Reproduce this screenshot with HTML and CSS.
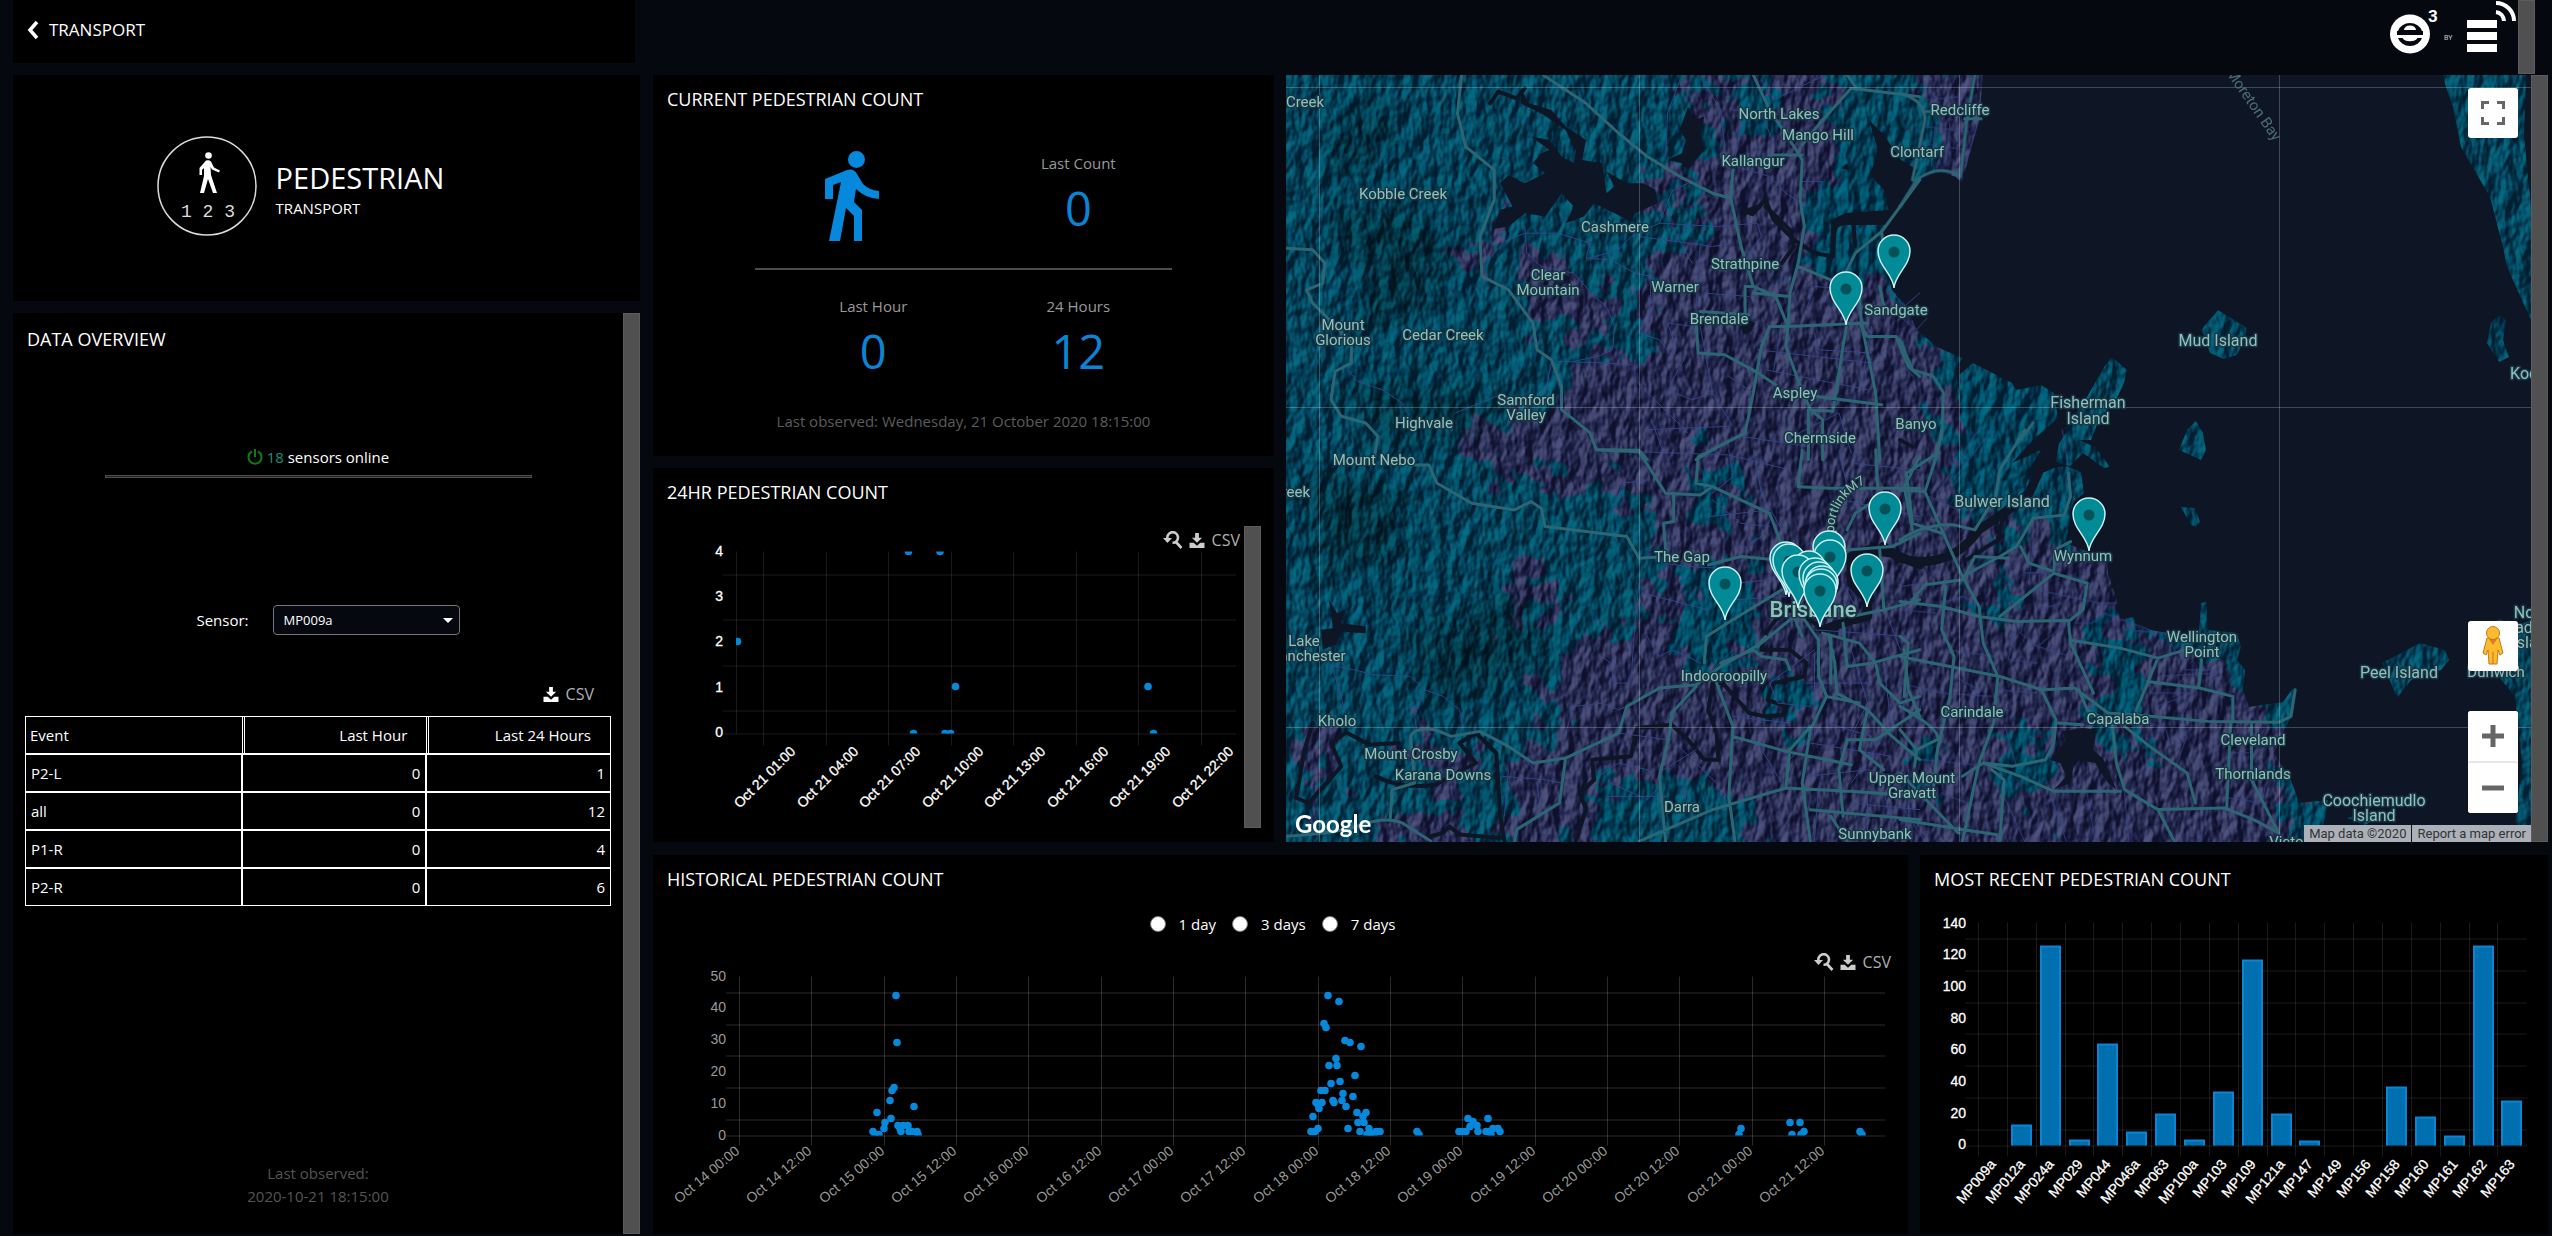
FILE: index.html
```html
<!DOCTYPE html>
<html lang="en">
<head>
<meta charset="utf-8">
<title>Pedestrian – Transport</title>
<link rel="stylesheet" href="styles.css">
</head>
<body>
<svg class="defs" width="0" height="0" aria-hidden="true">
  <symbol id="i-download" viewBox="0 0 16 16"><path fill="currentColor" d="M6 0h4v5h3.500L8 10.500 2.500 5H6zM0 10.500h4.500L8 13.500l3.500-3H16V16H0z"/></symbol>
  <symbol id="i-reset" viewBox="0 0 20 18"><path fill="none" stroke="currentColor" stroke-width="2.600" d="M5 9a5.300 5.300 0 1 1 4.500 2.800M12.500 10.500l6 6.500"/><path fill="currentColor" d="M0 7h9L4.500 12z"/></symbol>
</svg>

<header class="topbar">
  <a class="back" href="#">
    <svg width="12" height="20" viewBox="0 0 12 20" aria-hidden="true"><path d="M10 2L3 10l7 8" fill="none" stroke="#fff" stroke-width="3.500"/></svg>
    TRANSPORT
  </a>
  <div class="brand">
    <svg width="130" height="56" viewBox="2387 0 130 56" role="img" aria-label="e3">
      <ellipse cx="2409" cy="34" rx="20" ry="19.500" fill="#fff"/>
      <path d="M2397 31a12.500 11 0 0 1 24 0zM2397 38h4.500a8 5 0 0 0 15 0h4.500a12.500 11 0 0 1-24 0z" fill="#05080f"/>
      <path d="M2403 30a6 4.500 0 0 1 12 0z" fill="#fff"/>
      <path d="M2396 31h26v4h-26z" fill="#05080f"/>
      <text x="2427" y="22" class="brand-sup">3</text>
      <text x="2443" y="40" class="brand-by">BY</text>
      <path d="M2466 20h30v8h-30zM2466 32h30v8h-30zM2466 44h30v8h-30z" fill="#fff"/>
      <path d="M2495 12a9 9 0 0 1 8 9M2495 3a18 18 0 0 1 18 18" fill="none" stroke="#fff" stroke-width="4"/>
    </svg>
    <div class="scrollbar"></div>
  </div>
</header>

<main class="dash">
  <div class="left">
    <section class="card hero">
      <svg width="100" height="100" viewBox="0 0 100 100" aria-hidden="true">
        <circle cx="50" cy="50" r="49" fill="none" stroke="#ddd" stroke-width="1.500"/>
        <circle cx="51.500" cy="19.500" r="3.300" fill="#fff"/>
        <path d="M49 24.500q3-1 5 1l3 6 6 3-1 2-7-3-1.500-2.500L54 39l6 18h-4l-5-14-4 14h-4l4-17v-8l-2 2v5h-2.500v-7z" fill="#fff"/>
        <text x="51" y="81" class="hero-num" text-anchor="middle">1 2 3</text>
      </svg>
      <div class="hero-title">
        <h1>PEDESTRIAN</h1>
        <p>TRANSPORT</p>
      </div>
    </section>

    <section class="card overview">
      <div class="overview-body">
        <h2>DATA OVERVIEW</h2>
        <p class="online"><svg width="16" height="16" viewBox="0 0 16 16" aria-hidden="true"><path d="M5 2.500a6.500 6.500 0 1 0 6 0M8 0v8" fill="none" stroke="#0c7d16" stroke-width="2"/></svg> <b>18</b> sensors online</p>
        <hr>
        <div class="sensor">
          <label for="sensor">Sensor:</label>
          <span class="select"><select id="sensor"><option>MP009a</option></select></span>
        </div>
        <div class="tools"><button class="tool bright" type="button"><svg width="16" height="15"><use href="#i-download"/></svg><span>CSV</span></button></div>
        <table>
          <thead><tr><th>Event</th><th>Last Hour</th><th>Last 24 Hours</th></tr></thead>
          <tbody>
            <tr><td>P2-L</td><td>0</td><td>1</td></tr>
            <tr><td>all</td><td>0</td><td>12</td></tr>
            <tr><td>P1-R</td><td>0</td><td>4</td></tr>
            <tr><td>P2-R</td><td>0</td><td>6</td></tr>
          </tbody>
        </table>
        <p class="observed">Last observed:<br>2020-10-21 18:15:00</p>
      </div>
      <div class="scrollbar"></div>
    </section>
  </div>

  <div class="right">
    <div class="upper">
      <div class="middle">
        <section class="card">
          <h2>CURRENT PEDESTRIAN COUNT</h2>
          <div class="stats first">
            <svg class="walker" width="54" height="90" viewBox="0 0 54 90" aria-hidden="true"><circle cx="31.500" cy="8.500" r="8.500" fill="#0688dc"/><path fill="#0688dc" d="M0 28L22 19q7-2 10 4l6 10q6 6 16 7v8q-14-1-23-10l-2 13 8 8v31h-8V65l-8-8-6 33H4l12-59-8 3v14H0z"/></svg>
            <div class="stat"><span>Last Count</span><strong>0</strong></div>
          </div>
          <hr class="rule">
          <div class="stats">
            <div class="stat"><span>Last Hour</span><strong>0</strong></div>
            <div class="stat"><span>24 Hours</span><strong>12</strong></div>
          </div>
          <p class="note">Last observed: Wednesday, 21 October 2020 18:15:00</p>
        </section>

        <section class="card day">
          <h2>24HR PEDESTRIAN COUNT</h2>
          <div class="scroller">
            <div class="scroller-body">
              <div class="tools"><button class="tool" type="button" aria-label="Reset zoom"><svg width="20" height="18"><use href="#i-reset"/></svg></button><button class="tool" type="button"><svg width="16" height="15"><use href="#i-download"/></svg><span>CSV</span></button></div>
              <svg class="chart" id="day-chart" viewBox="653 551 591 277"></svg>
            </div>
            <div class="scrollbar"></div>
          </div>
        </section>
      </div>

      <section class="map">
        <div class="map-view">
        <svg class="map-art" viewBox="0 0 1245 767" preserveAspectRatio="xMidYMid slice" aria-label="Map of Brisbane">
          <defs>
            <filter id="relief" x="0" y="0" width="100%" height="100%" color-interpolation-filters="sRGB">
              <feTurbulence type="fractalNoise" baseFrequency=".07 .04" numOctaves="3" seed="8"/>
              <feColorMatrix values="0 0 0 0 0 0 0 0 0 0 0 0 0 0 0 1 0 0 0 0"/>
              <feDiffuseLighting surfaceScale="7" lighting-color="#fff"><feDistantLight azimuth="215" elevation="32"/></feDiffuseLighting>
            </filter>
            <filter id="ragged" x="-5%" y="-5%" width="110%" height="110%">
              <feTurbulence type="fractalNoise" baseFrequency=".035" numOctaves="4" seed="3"/>
              <feDisplacementMap in="SourceGraphic" scale="90" xChannelSelector="R" yChannelSelector="G"/>
            </filter>
            <filter id="soft"><feGaussianBlur stdDeviation="14"/></filter>
            <path id="land" d="M0 0H697L693 45 683 82 676 108 670 102 653 96 635 102 626 108 632 95 615 85 598 60 583 45 592 75 584 100 598 115 603 135 560 138 545 145 545 170 553 150 600 150 594 158 598 185 606 215 618 228 631 255 651 272 676 283 670 297 675 330 676 340 673 300 687 288 726 308 730 315 755 310 768 318 772 343 747 365 726 388 755 375 740 400 759 397 768 393 780 391 795 397 798 418 787 427 780 468 822 485 822 498 830 522 834 545 847 542 851 552 880 558 884 568 913 558 915 528 920 527 922 555 951 558 955 572 951 585 959 595 957 615 963 632 997 627 1007 613 1011 618 1003 645 988 678 1005 705 1013 728 1042 725 1038 748 1026 767H0z
              M1156 0L1167 32 1175 72 1204 122 1217 172 1221 192 1245 245V132L1238 60 1240 0z
              M915 255L932 235 961 253 959 262 951 280 938 284 924 278z
              M1213 240l7 5-3 20 6 17-10 5-12-19 4-20z
              M826 282L841 295 838 308 830 325 814 342 805 365 793 365 809 372 824 392 818 393 797 378 784 391 770 387 774 362 801 322 818 292z
              M910 346L917 358 920 375 915 385 893 375 901 355z
              M895 432L909 433 914 447 911 452 905 450z
              M1096 588L1134 568 1159 575 1163 585 1155 595 1125 605 1111 623 1105 608z
              M1061 743l20-5 8 6-10 6z
              M1229 552L1245 545V767L1229 752 1236 688 1229 622 1213 602 1196 595z"/>
            <clipPath id="land-clip"><use href="#land"/></clipPath>
            <g id="pin"><path d="M0 0C-1-14-16-22-16-37a16 16 0 0 1 32 0C16-22 1-14 0 0z" fill="#008b97" stroke="#c9f2f2" stroke-width="1.500"/><circle cy="-36" r="5.500" fill="#045257"/></g>
            <path id="m7" d="M548 458Q548 424 580 408"/>
          </defs>
          <rect width="1245" height="767" fill="#0e1626"/>
          <g clip-path="url(#land-clip)">
            <rect width="1245" height="767" fill="#02415a"/>
            <g fill="#252a53" filter="url(#ragged)">
              <path d="M165 365L205 345 275 325 290 290 370 280 360 195 395 175 410 150 480 160 500 210 540 220 580 200 630 220 640 260 660 310 665 360 660 420 720 455 790 470 830 480 850 530 870 570 960 600 975 650 1010 650 1000 710 1030 790H500L440 710 340 700 260 790H230L220 700 270 650 260 600 310 560 370 540 380 470 350 430 320 410 250 410z"/>
              <path d="M385 0H540L560 60 550 130 570 200 520 230 480 170 420 160 400 100 440 60z"/>
              <path d="M640 0H720V140H650z"/>
              <path d="M330 110L380 100 400 140 350 130zM130 640L190 680 170 720 130 700zM20 650L50 640 45 720 20 770zM160 180L210 150 200 210zM100 740L180 730 200 800H110zM210 500L260 470 280 540 230 560zM240 190L280 170 330 240 300 270 240 240z"/>
            </g>
            <g fill="#02415a" filter="url(#ragged)">
              <path d="M395 490L450 480 470 560 430 600 390 560zM400 380L460 400 450 440 410 430zM440 20L480 10 500 60 450 70zM520 120L590 60 600 200 560 220 520 180zM700 480L730 500 720 560 700 540zM810 540L860 560 850 700 810 640zM490 600L530 620 510 660 470 640zM720 640L760 650 750 740 710 720zM610 690L650 680 640 730zM660 300L780 320 780 400 690 420 660 380zM990 720L1030 720 1060 790H1000zM310 700L350 720 320 790H300z"/>
            </g>
            <g fill="#00121f" opacity=".45" filter="url(#soft)">
              <path d="M30 150L120 130 170 180 130 240 60 260 90 200zM60 310L200 320 210 350 100 370zM10 400L110 410 120 480 40 500zM120 560L230 520 260 580 150 640zM40 60L100 20 110 60 60 110z"/>
            </g>
            <rect class="relief" width="1245" height="767" filter="url(#relief)"/>
          </g>

          <g fill="#0e1626">
            <g transform="matrix(.408 0 0 .333 -6 -15)">
              <path d="M590 85L610 130 665 150 700 200 750 240 740 300 790 310 800 400 820 380 800 335 850 370 890 370 920 390 925 430 870 460 860 485 820 460 770 430 745 470 700 490 720 440 690 400 650 470 600 460 560 500 520 508 540 450 570 440 540 370 560 345 600 370 650 340 620 310 640 280 660 270 615 230 660 240 690 290 720 310 725 270 700 210 640 160 590 130z"/>
              <path d="M1000 140L1015 180 1040 170 1030 230 1040 270 1000 330 985 310 950 300 985 280 995 240 980 210zM1125 455L1180 430 1160 470zM1130 800l15-20 20 10-10 25-20 10zM1375 325l15-15 5 20z"/>
            </g>
            <g transform="matrix(.408 0 0 .333 -6 375)"><path d="M120 450L140 490 160 480 150 520 210 530 210 550 150 545 140 580 105 600 100 540 130 535z"/></g>
            <g transform="matrix(.416 0 0 .333 614 355)"><path d="M390 905L440 895 470 900 465 960 490 990 520 1080 500 1060 470 1000 420 990 410 1060 370 1080 400 1040 385 1000 360 990 400 930z"/></g>
          </g>

          <g class="line water">
            <g transform="matrix(.408 0 0 .333 -6 -15)"><path d="M1160 460L1190 420 1210 480 1260 540 1310 580 1355 590 1360 500 1400 480 1490 465M1190 440L1250 510 1260 560 1230 610M515 130L535 95 580 115 600 85M1405 490L1410 560"/></g>
            <g transform="matrix(.408 0 0 .333 -6 375)"><path d="M725 1175L750 1080 735 1030 770 990 765 930 860 920 875 835 960 825 1000 870 1040 930 1075 930 1070 850 1050 780 1060 700 1085 700 1150 790 1190 800 1235 795 1240 770 1195 750 1210 700 1285 680 1290 640 1250 600 1180 600 1190 550 1215 510 1250 480 1300 510 1330 540M165 850L220 885 290 880M235 980Q300 1020 380 1005L480 940 440 880 480 850 530 910 540 1100 550 1175M80 820L60 900 40 1045 70 1060 150 950 125 880 160 850M370 1160L400 1150 415 1130 440 1155 540 1165"/><path class="wide" d="M1330 540L1390 515 1440 500 1440 450 1400 400 1400 320 1440 300 1500 310 1568 345"/></g>
            <g transform="matrix(.416 0 0 .333 614 355)"><path class="wide" d="M-40 350L0 385Q70 410 130 370 160 350 190 300L260 240 310 190 350 80 390 0"/><path d="M250 250L235 330 160 390M520 430L510 470 530 470M0 30L30 50"/></g>
          </g>

          <g class="line street">
            <g transform="matrix(.408 0 0 .333 -6 -15)"><path d="M980 60L950 160 945 290M1035 60L1080 150 1090 260M1110 150L1180 160 1210 250M1130 150L1125 240 1110 320M1180 60L1210 120 1310 60 1330 50M1120 320L1200 350 1240 400 1290 440M1280 365H1330L1320 440M600 500L605 580 640 620 720 640 770 710 800 740 820 800 815 870 780 890 720 905M510 600L550 545 600 520 680 520 760 550 750 595 810 600 870 640 910 650M760 595L830 570 860 530 930 490 960 395 1000 370M930 490L1070 500 1170 490 1180 530 1140 600M880 530L1060 560 1110 550M960 500L1010 610M910 650L905 780M1030 550L1020 740M890 780L880 820 930 840 960 890 970 860 950 790 1010 800M1030 800L1060 1000 1110 1100M1040 700L1150 710M990 900L950 990 1010 1020 1060 1000M870 900L870 960 1000 1120M680 905L800 910 860 915M165 930L190 965 250 990 300 1030 315 1065M430 1060L530 1010 610 1040 650 1000 665 910M1170 870L1450 910M1190 930L1440 990M1230 790L1210 930M1310 820L1320 870 1450 880M1450 800L1420 1010M1240 1140L1370 1060 1400 1180M1290 750L1310 680 1400 690M900 1110L1100 1100M940 1180L910 1080M1490 680L1530 740 1568 700M1130 1130L1290 1160M1100 950L1160 1000"/></g>
            <g transform="matrix(.408 0 0 .333 -6 375)"><path d="M120 645L180 660 230 675 320 680 355 720 400 740 440 780 450 845M130 660L150 740 160 790M355 720L330 800 335 840M545 980L650 990 690 1000M650 990L600 930M550 1100L560 960M630 1000L640 1100M880 5L1100 15 1250 60M1100 0L1110 80 1060 130M1160 0L1180 130 1230 240M1050 200L1200 180M940 340L1000 350 1080 355M880 400L870 520 860 700M900 560L930 620 960 600 1000 620 1030 640M860 700L820 700 810 640 790 620M700 850L720 770 790 760 830 780 850 770M780 980L830 940 900 960 930 1010 900 1050 810 1000M800 1040L950 1040M960 870L1070 1000 1090 1050M830 850L950 870M980 950L1000 1090M1020 900L940 960M1110 800L1250 820M1120 400L1200 390 1250 350M1110 450L1240 440M1060 150L1130 220 1200 230M1310 600L1200 700 1220 760 1300 770M1310 610L1310 860 1240 940M1300 880L1500 920M1290 700L1450 700M1400 600L1440 760 1400 860M1480 640L1500 850M1340 820L1450 860M1470 880L1400 1000M1290 980L1440 960 1568 1000M1380 400L1410 470M1490 500L1520 600M1380 150L1568 200M1400 40L1568 60M1370 0L1390 110M1130 300L1180 260 1200 210M820 170L840 100 900 90M1310 540L1540 560M1160 860L1230 1000M1320 1010L1310 1170M1440 1030V1170M1480 1030L1500 1110M1540 960V1170M1400 1060L1568 1080M890 430L1050 480M1110 600L1070 650"/></g>
            <g transform="matrix(.416 0 0 .333 614 -75)"><path d="M60 300L150 290M60 380L165 395M50 430L160 450M120 370L110 500M85 380L75 500M190 360L160 480M60 250L90 300M0 950L40 990 65 955M80 1190L0 1290M190 1290L170 1320M0 1080L30 1130"/></g>
            <g transform="matrix(.416 0 0 .333 614 355)"><path d="M190 0L90 190M220 0L110 180M70 200L140 240 170 210M390 0L400 70 405 120M320 350L310 460M300 430L370 425M330 480L480 520 520 520M420 440L470 470M390 520L330 540M480 520L490 560 460 580 420 580M300 560L290 610 330 650 410 680M330 650L380 600 410 580M540 600L640 610 660 660M680 680L685 720 755 720 750 780M600 790L700 790 620 830M620 740L760 730M700 800L670 880 690 920 660 1020M800 970H840M790 1105L870 1120 880 1060M100 520L150 500 190 520M110 660L230 680M130 740L190 780 180 900M50 840L20 900M60 790L40 870 100 900M0 540L90 550M50 990L180 1005M0 760L100 790 220 800M280 1010L250 880M230 780L330 790M0 470L60 460M490 550L600 600M280 600L260 690 330 700M580 870L640 900 650 950M540 1090L550 1236M740 1140L720 1236M250 1100L300 1236M100 1090L180 1130M0 1120L60 1236M360 1090L400 1236M450 1090L470 1236"/></g>
          </g>

          <g class="line highway">
            <g transform="matrix(.408 0 0 .333 -6 -15)"><path d="M445 45L435 160 455 260 525 330 525 420 490 530 495 650 560 690 620 790 630 870 665 900 690 980 690 1050 760 1120 775 1170 880 1172 900 1200M645 45L750 130 830 220 900 290 980 350 1060 400 1105 415 1130 560 1160 680 1215 710 1245 800 1240 860 1275 980 1300 1050 1330 1080V1200M1110 330L1105 415M1160 45L1200 150 1260 260 1280 300 1275 420 1285 500 1270 610 1250 700 1245 800 1200 800 1180 860 1160 1000 1140 1120 1060 1170 1020 1200M1280 255L1330 180 1400 85 1568 110M1390 45L1410 80M1200 285H1280M1270 620L1350 660 1420 700 1425 790 1460 1000 1470 1200M1568 360L1475 515 1410 580 1370 680M1475 515L1480 600M1245 800L1440 790M1420 790L1440 830 1510 830 1540 920 1568 950M15 565L80 570 110 610 105 670 65 690 80 730 105 760 175 850V910L135 935 125 1020 150 1070 210 1090 240 1130 230 1200M1160 680H1140V790M1030 755L1150 765M1020 790L1025 880 1090 885 1165 935 1215 975M1310 1010L1475 1035M1355 1055L1380 860 1390 790M1295 1050L1355 1055M1295 1050V1200M1470 680L1480 740M1160 700L1250 710"/></g>
            <g transform="matrix(.408 0 0 .333 -6 375)"><path d="M330 45H365L385 100 470 160 575 180 615 155 640 175 650 230 750 245 850 260 880 325 920 322M780 0L880 5 945 130 1030 135 1060 110 1200 190 1225 270 1220 330 1130 320 1050 345M1060 110L1020 100 1025 20 1060 0M965 135V215L940 220 945 300M15 1160Q150 1150 200 1125 260 1100 300 1120L370 1175M270 1110L275 1020 330 1000 320 860Q330 830 380 840L420 860 490 845 560 890 620 940 700 925 830 850 850 770 930 715 1020 705 1080 650 1180 580 1260 500M700 925L685 1060 580 1140 575 1175M880 1175L1060 1080 1240 1015 1400 1025 1568 1040M1070 700L1110 830 1100 1040 1115 1175M1110 860L1240 905 1400 945M1040 640L1045 560 1110 510 1230 420M1020 710L960 790 955 850 930 980 945 1175M1080 640L1160 600 1180 620 1240 630 1250 660M1280 500L1320 570V680L1340 740 1300 840 1280 1000 1300 1175M1345 560L1360 640 1365 730 1440 780 1500 860 1568 930M1330 550L1420 580 1460 640 1470 700 1520 760 1568 740M1380 520L1390 650 1450 640 1568 600M1568 800L1540 720 1530 600M1568 780L1460 870 1390 870 1370 960 1380 1100M1340 740L1420 760M1240 1010L1250 900 1300 830M1300 1080L1568 1110M1350 1100L1390 1175M1225 300L1250 350M1350 560L1350 700M1400 500L1480 480 1568 450M1480 480L1470 300M1390 300L1500 290 1568 250M1350 115H1568M1390 240L1410 190 1460 150M1280 0L1270 110 1350 115M1460 0L1465 110M1568 20L1530 110 1550 240M1440 780L1420 900 1480 960M1280 560L1260 500M1190 560L1170 590"/></g>
            <g transform="matrix(.416 0 0 .333 614 -75)"><path d="M180 225L160 370 145 530Q95 490 40 540L0 620M0 280Q60 300 60 360L30 540M55 335H80M155 357H195M0 1020L30 1110 80 1130 105 1180 100 1320M320 1270L290 1320"/></g>
            <g transform="matrix(.416 0 0 .333 614 355)"><path d="M0 180L60 185 150 440 190 530 200 640 235 740 225 880 190 1000 150 1236M100 0L90 70 60 185M90 70L15 130 30 280 100 310M0 330Q60 280 130 285L180 300 230 200 240 120 300 0M150 440L240 380 280 350 320 265 395 255 410 200 405 130M0 515L100 530 190 560 280 575 405 572M30 510L60 465 150 450M240 560L370 430 450 460 440 540 405 575 410 640 465 790M160 430L180 380 260 385M290 350L310 400 370 425 372 360 410 335M415 632L530 655 620 685 700 655M620 685L595 760 565 850M595 755L720 775 800 800V870M725 690L718 775M0 680L120 710 240 740 340 780 420 775 500 850 560 855 740 875 910 878 940 860 950 780M340 780L375 870 370 940 350 990 270 1010 200 1000 150 1040M380 880L440 885M430 780L450 840 510 880 520 1000 540 1080 620 1140 780 1135 850 1170 910 1210M540 890L600 950 690 1030 710 1120M200 1000L290 1040 370 1085 530 1085M845 880V1050L910 1210M795 880L785 1140M620 1140L660 1236M0 830Q100 900 90 930L40 960 0 900M40 960L35 1010M110 470L100 600 130 680 120 800 90 960 80 1080M0 1030L140 1210M0 1170L150 1200 230 1215M220 1020L250 1050 240 1236M0 620L20 640 10 800"/></g>
          </g>

          <path class="graticule" d="M33.500 0V767M353.500 0V767M673.500 0V767M993.500 0V767M0 12.500H1245M0 332.500H1245M0 652.500H1245"/>

          <g class="labels">
            <text x="19" y="32">Creek</text><text x="493" y="44">North Lakes</text><text x="532" y="65">Mango Hill</text><text x="674" y="40">Redcliffe</text><text x="467" y="91">Kallangur</text><text x="631" y="82">Clontarf</text><text x="117" y="124">Kobble Creek</text><text x="329" y="157">Cashmere</text><text x="262" y="205">Clear<tspan x="262" dy="15">Mountain</tspan></text><text x="459" y="194">Strathpine</text><text x="389" y="217">Warner</text><text x="433" y="249">Brendale</text><text x="57" y="255">Mount<tspan x="57" dy="15">Glorious</tspan></text><text x="157" y="265">Cedar Creek</text><text x="610" y="240">Sandgate</text><text x="240" y="330">Samford<tspan x="240" dy="15">Valley</tspan></text><text x="138" y="353">Highvale</text><text x="509" y="323">Aspley</text><text x="534" y="368">Chermside</text><text x="630" y="354">Banyo</text><text x="88" y="390">Mount Nebo</text><text x="5" y="422">Creek</text><text x="396" y="487">The Gap</text><text x="797" y="486">Wynnum</text><text x="438" y="606">Indooroopilly</text><text x="18" y="571">Lake<tspan x="20" dy="15">Manchester</tspan></text><text x="51" y="651">Kholo</text><text x="125" y="684">Mount Crosby</text><text x="157" y="705">Karana Downs</text><text x="396" y="737">Darra</text><text x="626" y="708">Upper Mount<tspan x="626" dy="15">Gravatt</tspan></text><text x="589" y="764">Sunnybank</text><text x="686" y="642">Carindale</text><text x="832" y="649">Capalaba</text><text x="967" y="670">Cleveland</text><text x="967" y="704">Thornlands</text><text x="916" y="567">Wellington<tspan x="916" dy="15">Point</tspan></text><text x="1210" y="602">Dunwich</text><text x="1028" y="772">Victoria Point</text>
            <g class="isle"><text x="716" y="432">Bulwer Island</text><text x="802" y="333">Fisherman<tspan x="802" dy="16">Island</tspan></text><text x="932" y="271">Mud Island</text><text x="1258" y="304">Kooringal</text><text x="1113" y="603">Peel Island</text><text x="1088" y="731">Coochiemudlo<tspan x="1088" dy="15">Island</tspan></text><text x="1248" y="543">North<tspan x="1248" dy="15">Stradbroke</tspan><tspan x="1248" dy="15">Island</tspan></text></g>
            <text class="city" x="527" y="542">Brisbane</text>
            <text class="sea" x="967" y="34" transform="rotate(55 967 30)">Moreton Bay</text>
            <text class="road"><textPath href="#m7">portlinkM7</textPath></text>
          </g>

          <g id="pins"></g>
        </svg>
        <button class="map-btn full" type="button" aria-label="Toggle fullscreen view"><svg width="24" height="24" viewBox="0 0 24 24"><path d="M1.500 8V1.500H8M16 1.500h6.500V8M22.500 16v6.500H16M8 22.500H1.500V16" fill="none" stroke="#666" stroke-width="3"/></svg></button>
        <div class="map-controls">
          <button class="map-btn" type="button" aria-label="Street View"><svg width="22" height="40" viewBox="0 0 22 40"><path d="M5 12h12l4 15-3 2-2-5-1 14H7L6 24l-2 5-3-2z" fill="#fbbb2c" stroke="#c5791d"/><path d="M7 13h8l-4 6z" fill="#e07a26"/><circle cx="11" cy="7" r="6.500" fill="#fbbb2c" stroke="#c5791d"/><path d="M11 26v12" stroke="#c5791d"/></svg></button>
          <div class="zoom">
            <button class="map-btn" type="button" aria-label="Zoom in"><svg width="24" height="24"><path d="M12 1v22M1 12h22" stroke="#666" stroke-width="5"/></svg></button>
            <button class="map-btn" type="button" aria-label="Zoom out"><svg width="24" height="24"><path d="M1 12h22" stroke="#666" stroke-width="5"/></svg></button>
          </div>
        </div>
        <span class="google">Google</span>
        <div class="attribution"><span>Map data ©2020</span><a href="#">Report a map error</a></div>
        </div>
        <div class="scrollbar"></div>
      </section>
    </div>

    <div class="lower">
      <section class="card">
        <h2>HISTORICAL PEDESTRIAN COUNT</h2>
        <div class="range">
          <label><input type="radio" name="range">1 day</label>
          <label><input type="radio" name="range">3 days</label>
          <label><input type="radio" name="range">7 days</label>
        </div>
        <div class="tools"><button class="tool" type="button" aria-label="Reset zoom"><svg width="20" height="18"><use href="#i-reset"/></svg></button><button class="tool" type="button"><svg width="16" height="15"><use href="#i-download"/></svg><span>CSV</span></button></div>
        <svg class="chart" id="history-chart" viewBox="653 974 1255 258"></svg>
      </section>
      <section class="card">
        <h2>MOST RECENT PEDESTRIAN COUNT</h2>
        <svg class="chart" id="recent-chart" viewBox="1920 892 628 340"></svg>
      </section>
    </div>
  </div>
</main>
<script src="app.js"></script>
</body>
</html>
```
FILE: styles.css
```css
* { box-sizing: border-box; }
body {
  margin: 0;
  min-height: 100vh;
  display: flex;
  flex-direction: column;
  gap: 12px;
  padding: 0 4px 2px 13px;
  background: #05080f;
  color: #fff;
  font: 16px/24px "Open Sans", "Noto Sans", sans-serif;
}
h1, h2, p { margin: 0; font-weight: 400; }
button { font: inherit; color: inherit; background: none; border: 0; padding: 0; cursor: pointer; }
.defs { position: absolute; }
.card { background: #000; min-width: 0; min-height: 0; display: flex; flex-direction: column; }
h2 { font-size: 18px; line-height: 24px; padding: 12px 14px 0; }
.scrollbar { width: 17px; flex: none; background: #505050; border: 1px solid #5c5c5c; }

/* Top bar */
.topbar { display: flex; justify-content: space-between; height: 63px; flex: none; }
.back { width: 622px; background: #000; color: #fff; text-decoration: none; font-size: 17px; display: flex; align-items: center; gap: 10px; padding: 0 0 4px 14px; }
.brand { display: flex; height: 74px; margin-right: 13px; }
.brand-sup { font: 700 17px Roboto, sans-serif; fill: #fff; }
.brand-by { font: 7px Roboto, sans-serif; fill: #ccc; }

/* Page grid */
.dash { flex: 1; display: grid; grid-template-columns: 627fr 1895fr; gap: 13px; }
.left { display: grid; grid-template-rows: 226px 1fr; gap: 12px; min-width: 0; }
.right { display: grid; grid-template-rows: 767fr 379fr; gap: 13px; min-width: 0; }
.upper { display: grid; grid-template-columns: 621fr 1262fr; gap: 12px; }
.middle { display: grid; grid-template-rows: 381fr 374fr; gap: 12px; min-width: 0; }
.lower { display: grid; grid-template-columns: 1255fr 628fr; gap: 12px; }

/* Title card */
.hero { flex-direction: row; align-items: center; justify-content: center; gap: 19px; padding: 0 52px 4px 0; }
.hero-title { padding-top: 8px; }
.hero h1 { font-size: 29px; line-height: 36px; }
.hero p { font-size: 15px; }
.hero-num { font: 18px "Liberation Mono", monospace; fill: #ddd; }

/* Data overview */
.overview { flex-direction: row; }
.overview h2 { padding-top: 14px; }
.overview-body { flex: 1; display: flex; flex-direction: column; font-size: 15px; min-width: 0; }
.online { text-align: center; margin-top: 94px; }
.online b { color: #16917a; font-weight: 400; }
.online svg { vertical-align: -2px; }
hr { width: 70%; height: 3px; margin: 6px auto 0; border: 1px solid #4d4d4d; background: #222; }
.sensor { display: flex; justify-content: center; align-items: center; gap: 24px; margin-top: 127px; padding-left: 20px; }
.select { position: relative; width: 187px; }
.select::after { content: ""; position: absolute; right: 7px; top: 13px; border: 5px solid transparent; border-top-color: #fff; pointer-events: none; }
select { appearance: none; width: 100%; height: 30px; padding: 0 10px; color: #fff; background: #05080f; border: 1px solid #777; border-radius: 4px; font: 13px "Open Sans", sans-serif; }
.overview .tools { margin-top: 49px; padding-right: 29px; }
table { margin: 12px 12px 0; border-collapse: separate; border-spacing: 0; table-layout: fixed; line-height: 20px; }
th, td { border: 1px solid #fff; font-weight: 400; text-align: right; height: 38px; padding: 0 5px; }
th { padding: 0 19px 0 4px; width: 185px; }
th:first-child, td:first-child { text-align: left; width: 217px; }
th + th { border-left: 3px double #fff; }
th:not(:last-child) { border-right: 0; }
.observed { margin-top: auto; padding-bottom: 26px; line-height: 23px; text-align: center; color: #555; }

.tools { display: flex; justify-content: flex-end; align-items: center; gap: 6px; }
.tool { display: flex; align-items: center; gap: 7px; height: 20px; color: #ccc; font-size: 16px; line-height: 20px; }
.tool span { color: #b0b0b0; }
.bright { color: #fff; }

/* Current count */
.stats { display: grid; grid-template-columns: 1fr 1fr; width: 67%; margin: 24px 0 0 18%; padding-left: 6px; }
.stats.first { margin-top: 40px; }
.walker { justify-self: center; margin-right: 42px; }
.stat { text-align: center; color: #999; font-size: 15px; }
.stat span { display: block; }
.stat strong { display: block; font-size: 47px; line-height: 60px; font-weight: 400; color: #0b84d4; margin-top: 3px; }
.rule { width: 67%; margin-top: 27px; border: 0; background: #4c4c4c; height: 2px; }
.note { text-align: center; color: #5c5c5c; font-size: 15px; margin-top: 28px; }

/* Charts */
.scroller { flex: 1; display: flex; margin: 22px 13px 14px 0; min-height: 0; }
.scroller-body { flex: 1; display: flex; flex-direction: column; min-width: 0; }
.scroller .tools { padding: 4px 4px 0 0; }
.chart { width: 100%; flex: 1 1 0px; min-height: 0; overflow: visible; display: block; }
.chart .grid { stroke: #fff; stroke-opacity: .1; fill: none; }
.chart text { font: 14px "Liberation Sans", Arial, sans-serif; fill: #fff; }
#day-chart text, #recent-chart text { stroke: #fff; stroke-width: .3px; }
#history-chart text { fill: #999; }
#history-chart .grid { stroke-opacity: .17; }
.dot { fill: #0688dc; }
.bar { fill: #006fb0; stroke: #0b84d4; stroke-width: 2; }
.range { display: flex; justify-content: center; gap: 16px; margin-top: 18px; padding-right: 16px; height: 30px; font-size: 15px; line-height: 30px; }
.range label { display: flex; align-items: center; gap: 13px; }
.range input { appearance: none; width: 16px; height: 16px; margin: 0; background: #fff; border: 1px solid #777; border-radius: 50%; }
.lower .tools { margin-top: 13px; padding: 0 17px 3px 0; }

/* Map */
.map { display: flex; min-width: 0; }
.map-view { position: relative; flex: 1; overflow: hidden; background: #0e1626; }
.map-art { position: absolute; inset: 0; width: 100%; height: 100%; }
.relief { mix-blend-mode: soft-light; opacity: .7; }
.line { fill: none; stroke-linejoin: round; stroke-linecap: round; }
.line path { vector-effect: non-scaling-stroke; }
.water { stroke: #0e1626; stroke-width: 4px; }
.water .wide { stroke-width: 9px; }
.street { stroke: #36468a; stroke-width: 1px; opacity: .9; }
.highway { stroke: #2c6675; stroke-width: 3px; }
.graticule { stroke: #fff; stroke-opacity: .22; fill: none; }
.labels text { font: 15px Roboto, sans-serif; fill: #8ec3b9; text-anchor: middle; paint-order: stroke; stroke: #1a3646; stroke-width: 3px; stroke-linejoin: round; }
.labels .isle text { font-size: 16px; }
.labels .city { font-size: 22px; font-weight: 500; }
.labels .sea { fill: #4e6d70; stroke: none; }
.labels .road { font-size: 13px; text-anchor: start; }
.map-btn { display: grid; place-items: center; width: 50px; height: 50px; background: #fff; border-radius: 3px; }
.full { position: absolute; right: 13px; top: 13px; }
.map-controls { position: absolute; right: 13px; bottom: 29px; display: grid; gap: 40px; }
.zoom { background: #fff; border-radius: 3px; }
.zoom .map-btn + .map-btn { border-top: 2px solid #e6e6e6; height: 52px; }
.google { position: absolute; left: 9px; bottom: 4px; font: 700 24px/28px Lato, sans-serif; color: #fff; }
.attribution { position: absolute; right: 0; bottom: 0; display: flex; gap: 1px; font: 13px/17px Roboto, sans-serif; }
.attribution > * { background: #acb0b8; color: #333; text-decoration: none; padding: 0 5px; }
```
FILE: app.js
```js
const NS = 'http://www.w3.org/2000/svg';

function add(parent, tag, attrs, text) {
  const node = document.createElementNS(NS, tag);
  for (const key in attrs) node.setAttribute(key, attrs[key]);
  if (text !== undefined) node.textContent = text;
  parent.appendChild(node);
  return node;
}

function rotated(svg, text, x, y, angle, anchor) {
  add(svg, 'text', { x, y, 'text-anchor': anchor, transform: `rotate(${angle} ${x} ${y})` }, text);
}

function axis(svg, values, right, top, step) {
  values.forEach((v, i) => add(svg, 'text', { x: right, y: top + i * step + 5, 'text-anchor': 'end' }, v));
}

function dots(svg, id, box, points) {
  const clip = add(svg, 'clipPath', { id });
  add(clip, 'rect', { x: box[0], y: box[1], width: box[2], height: box[3] });
  const group = add(svg, 'g', { class: 'dot', 'clip-path': `url(#${id})` });
  points.forEach(([cx, cy]) => add(group, 'circle', { cx, cy, r: 3.8 }));
}

// Last 24 hours
const day = document.getElementById('day-chart');
let d = 'M736.5 552V734M723 734.5H1236';
for (let i = 0; i < 4; i++) d += `M723 ${575 + Math.round(i * 45.4)}.5H1236`;
for (let i = 0; i < 8; i++) {
  const x = 763 + Math.round(i * 62.5);
  d += `M${x}.5 552V746`;
  rotated(day, `Oct 21 ${String(1 + i * 3).padStart(2, '0')}:00`, x + 5, 781, -45, 'middle');
}
add(day, 'path', { class: 'grid', d });
axis(day, [4, 3, 2, 1, 0], 723, 551, 45.4);
dots(day, 'day-clip', [736, 552, 500, 182], [
  [737.5, 642], [908.5, 552], [940, 552], [913.5, 734], [945, 734], [950.5, 734], [955.5, 687], [1148, 687], [1153.5, 734]
]);

// Seven day history
const history = document.getElementById('history-chart');
d = 'M726 1134.5H1885';
for (let i = 0; i < 5; i++) d += `M726 ${991 + Math.round(i * 31.7)}.5H1885`;
for (let i = 0; i < 16; i++) {
  const x = 739.5 + Math.round(i * 72.33);
  d += `M${x} 975V1144`;
  rotated(history, `Oct ${14 + Math.floor(i / 2)} ${i % 2 ? '12' : '00'}:00`, x + 1, 1151, -40, 'end');
}
add(history, 'path', { class: 'grid', d });
axis(history, [50, 40, 30, 20, 10, 0], 726, 974, 31.8);
dots(history, 'history-clip', [739, 975, 1147, 159], [
  [896, 994], [897, 1041], [894, 1086], [892, 1089], [890, 1099], [877, 1111], [914, 1105], [891, 1117], [885, 1121], [884, 1127],
  [873, 1130], [875, 1133], [879, 1133], [898, 1124], [900, 1127], [903, 1124], [908, 1124], [901, 1130], [909, 1130], [912, 1130],
  [917, 1130], [918, 1133], [1328, 994], [1339, 1000], [1324, 1022], [1326, 1026], [1345, 1039], [1350, 1041], [1361, 1045],
  [1336, 1057], [1329, 1064], [1337, 1064], [1355, 1074], [1340, 1080], [1331, 1082], [1321, 1089], [1325, 1089], [1343, 1092],
  [1353, 1095], [1342, 1099], [1333, 1099], [1334, 1101], [1316, 1101], [1322, 1101], [1346, 1105], [1319, 1107], [1318, 1103],
  [1313, 1115], [1357, 1111], [1366, 1111], [1363, 1115], [1358, 1121], [1364, 1121], [1348, 1127], [1318, 1127], [1311, 1130],
  [1315, 1130], [1360, 1130], [1369, 1127], [1367, 1133], [1370, 1132], [1376, 1130], [1380, 1130], [1374, 1133], [1417, 1130],
  [1419, 1133], [1459, 1130], [1462, 1130], [1466, 1130], [1468, 1117], [1470, 1125], [1473, 1120], [1477, 1124], [1478, 1130],
  [1488, 1117], [1486, 1130], [1489, 1130], [1493, 1127], [1498, 1127], [1500, 1130], [1491, 1133], [1741, 1127], [1739, 1133],
  [1790, 1121], [1800, 1121], [1792, 1133], [1801, 1133], [1804, 1130], [1860, 1130], [1862, 1133]
]);

// Most recent count for each sensor
const recent = document.getElementById('recent-chart');
const counts = [
  ['MP009a', 0], ['MP012a', 13], ['MP024a', 126], ['MP029', 4], ['MP044', 64], ['MP046a', 9], ['MP063', 20], ['MP100a', 4],
  ['MP103', 34], ['MP109', 117], ['MP121a', 20], ['MP147', 3], ['MP149', 0], ['MP156', 0], ['MP158', 37], ['MP160', 18],
  ['MP161', 6], ['MP162', 126], ['MP163', 28]
];
d = 'M1965 1145.5H2527';
for (let i = 0; i < 7; i++) d += `M1965 ${938 + Math.round(i * 31.8)}.5H2527`;
for (let i = 0; i < 19; i++) d += `M${1978.5 + Math.round(i * 28.86)} 922V1156`;
add(recent, 'path', { class: 'grid', d });
axis(recent, [140, 120, 100, 80, 60, 40, 20, 0], 1966, 922, 31.7);
counts.forEach(([name, n], i) => {
  const x = 1978.5 + Math.round(i * 28.86);
  const h = Math.round(n * 1.59);
  if (n) add(recent, 'path', { class: 'bar', d: `M${x + 4.5} 1145V${1146 - h}h19V1145` });
  rotated(recent, name, x + 18, 1164, -50, 'end');
});

// Sensor pins, drawn north to south so that nearer ones overlap
const pins = document.getElementById('pins');
[[608, 213], [560, 250], [599, 470], [803, 476], [543, 509], [544, 518], [500, 520], [503, 522], [523, 529], [581, 532], [512, 533],
 [529, 536], [533, 540], [536, 544], [439, 545], [535, 547], [534, 552]]
  .forEach(([x, y]) => add(pins, 'use', { href: '#pin', x, y }));
```
